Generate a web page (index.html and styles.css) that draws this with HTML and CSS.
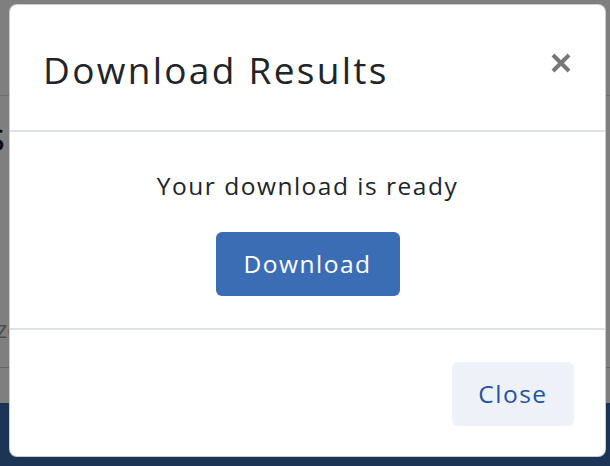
FILE: index.html
```html
<!DOCTYPE html>
<html lang="en">
<head>
<meta charset="utf-8">
<title>Download Results</title>
<link rel="stylesheet" href="styles.css">
</head>
<body>
<div class="page">
  <div class="page-top"></div>
  <div class="page-main">
    <div class="page-heading">s</div>
    <div class="page-field">zoom</div>
  </div>
  <div class="page-footer"></div>
</div>
<div class="backdrop"></div>
<div class="modal" role="dialog" aria-labelledby="modal-title">
  <div class="modal-header">
    <h2 class="modal-title" id="modal-title">Download Results</h2>
    <button class="btn-x" aria-label="Close">
      <svg width="22" height="22" viewBox="0 0 22 22" aria-hidden="true"><path d="M3 3 L19 19 M19 3 L3 19" stroke="#777" stroke-width="4" stroke-linecap="butt" fill="none"/></svg>
    </button>
  </div>
  <div class="modal-body">
    <p class="ready">Your download is ready</p>
    <button class="btn btn-primary">Download</button>
  </div>
  <div class="modal-footer">
    <button class="btn btn-light">Close</button>
  </div>
</div>
</body>
</html>
```

FILE: styles.css
```css
* { box-sizing: border-box; }
html, body { margin: 0; padding: 0; }
body {
  width: 610px;
  height: 466px;
  overflow: hidden;
  position: relative;
  font-family: "Open Sans", "Lato", sans-serif;
  color: #212529;
  background: #fff;
}
.page { display: flex; flex-direction: column; height: 466px; }
.page-top { height: 96px; border-bottom: 1px solid #dcdcdc; flex: none; }
.page-main { flex: 1; display: flex; flex-direction: column; }
.page-heading {
  font-size: 40px; line-height: 40px; margin-top: 20px; margin-left: -14px; color: #111;
}
.page-field {
  margin-top: 161px; font-size: 24px; line-height: 24px; color: #999;
  margin-left: -4px;
  border-bottom: 1px solid #ccc; padding-bottom: 26px;
}
.page-footer { height: 63px; background: #386aac; flex: none; }
.backdrop {
  position: absolute; inset: 0; background: rgba(0, 0, 0, 0.5);
}
.modal {
  position: absolute;
  left: 9px; top: 4px;
  width: 597px; height: 453px;
  background: #fff;
  border: 1px solid rgba(0, 0, 0, 0.2);
  border-radius: 8px;
  display: flex; flex-direction: column;
}
.modal-header {
  height: 127px;
  display: flex; align-items: center; justify-content: space-between;
  padding: 6px 33px 0 33px;
  border-bottom: 2px solid #dee2e6;
  flex: none;
}
.modal-title {
  margin: 0; font-weight: 400; font-size: 37px; line-height: 1.2; color: #212529;
  letter-spacing: 2.3px;
}
.btn-x {
  background: none; border: 0; padding: 0; width: 22px; height: 22px; cursor: pointer;
  margin-top: -16px;
}
.btn-x svg { display: block; }
.modal-body {
  height: 198px;
  display: flex; flex-direction: column; align-items: center;
  padding-top: 36px;
  border-bottom: 2px solid #dee2e6;
  flex: none;
}
.ready { margin: 0 0 28px; font-size: 24.5px; line-height: 36px; color: #212529; letter-spacing: 1.5px; }
.btn {
  font-family: inherit; font-size: 24.5px; line-height: 32px;
  border: 0; border-radius: 6px; cursor: pointer;
  letter-spacing: 1.5px;
  padding: 0;
}
.btn-primary {
  width: 184px; height: 64px; background: #3b6db5; color: #fff;
}
.modal-footer {
  flex: 1;
  display: flex; justify-content: flex-end; align-items: flex-start;
  padding: 32px 31px 0 0;
}
.btn-light {
  width: 122px; height: 64px; background: #eef2f8; color: #2352a8;
}
```
